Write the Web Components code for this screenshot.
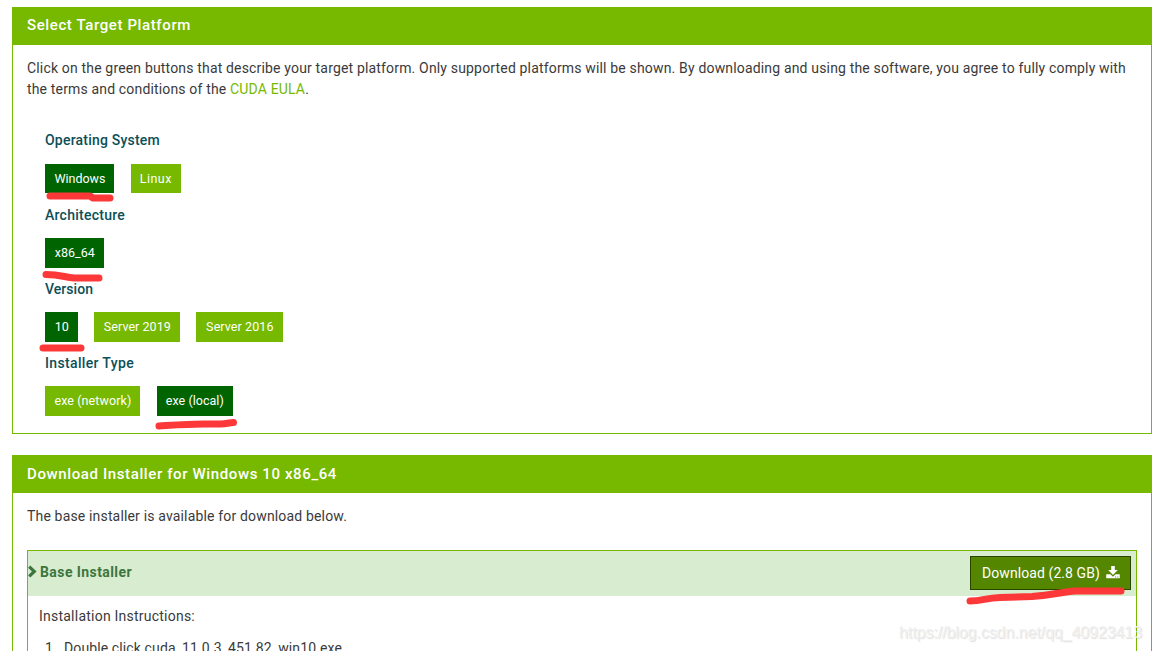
<!DOCTYPE html>
<html lang="en">
<head>
<meta charset="utf-8">
<title>CUDA Toolkit Download</title>
<style>
  :root {
    --color-green: #76b900;
    --color-green-dark: #006400;
    --color-text: #3a3a3a;
    --color-label: #0b4f58;
    --color-mark: #fc3838;
  }

  html, body {
    height: 651px;
    margin: 0;
    overflow: hidden;
    background: #fff;
  }

  body {
    position: relative;
    font-family: Roboto, "Liberation Sans", sans-serif;
    font-size: 14px;
    line-height: 21px;
    color: var(--color-text);
  }

  main {
    display: flex;
    flex-direction: column;
    gap: 21px;
    box-sizing: border-box;
    height: 651px;
    padding: 7px 0 0 12px;
    overflow: hidden;
  }

  a {
    color: var(--color-green);
    text-decoration: none;
  }
</style>
</head>
<body>

<main>
  <panel-card style="height: 427px">
    <tracked-text slot="title" measure="164">Select Target Platform</tracked-text>
    <tracked-text measure="1099">Click on the green buttons that describe your target platform. Only supported platforms will be shown. By downloading and using the software, you agree to fully comply with</tracked-text>
    <tracked-text measure="282">the terms and conditions of the <a href="#">CUDA EULA</a>.</tracked-text>

    <option-list>
      <option-row>
        <tracked-text slot="label" measure="115">Operating System</tracked-text>
        <option-pill selected style="width: 69.4px; height: 29px"><tracked-text measure="51">Windows</tracked-text></option-pill>
        <option-pill style="width: 50px; height: 29px"><tracked-text measure="32">Linux</tracked-text></option-pill>
      </option-row>
      <option-row>
        <tracked-text slot="label" measure="80">Architecture</tracked-text>
        <option-pill selected style="width: 59px"><tracked-text measure="40">x86_64</tracked-text></option-pill>
      </option-row>
      <option-row>
        <tracked-text slot="label" measure="48">Version</tracked-text>
        <option-pill selected style="width: 32.9px"><tracked-text measure="14">10</tracked-text></option-pill>
        <option-pill style="width: 86px"><tracked-text measure="67">Server 2019</tracked-text></option-pill>
        <option-pill style="width: 86.7px"><tracked-text measure="67.5">Server 2016</tracked-text></option-pill>
      </option-row>
      <option-row>
        <tracked-text slot="label" measure="89">Installer Type</tracked-text>
        <option-pill style="width: 95.4px"><tracked-text measure="77">exe (network)</tracked-text></option-pill>
        <option-pill selected style="width: 76px"><tracked-text measure="58">exe (local)</tracked-text></option-pill>
      </option-row>
    </option-list>
  </panel-card>

  <panel-card style="height: 240px; --title-top: 8px">
    <tracked-text slot="title" measure="310">Download Installer for Windows 10 x86_64</tracked-text>
    <tracked-text measure="320">The base installer is available for download below.</tracked-text>

    <installer-box>
      <tracked-text slot="name" measure="92">Base Installer</tracked-text>
      <download-button slot="action"><tracked-text measure="118">Download (2.8 GB)</tracked-text></download-button>
      <tracked-text measure="156">Installation Instructions:</tracked-text>
      <step-item number="1."><tracked-text measure="278">Double click cuda_11.0.3_451.82_win10.exe</tracked-text></step-item>
    </installer-box>
  </panel-card>
</main>

<pen-marks></pen-marks>
<water-mark><tracked-text measure="243">https://blog.csdn.net/qq_40923413</tracked-text></water-mark>

<script>
// Attaches an open shadow root filled with the given markup
function render(el, html) {
  if (el.shadowRoot) return;
  const template = document.createElement('template');
  template.innerHTML = html;
  el.attachShadow({ mode: 'open' }).appendChild(template.content.cloneNode(true));
}

/**
 * <panel-card> bordered section with a green title bar
 * Slots: title, default (body)
 */
class PanelCard extends HTMLElement {
  connectedCallback() {
    render(this, `
      <style>
        :host {
          display: flex;
          flex: none;
          flex-direction: column;
          box-sizing: border-box;
          border: 1px solid var(--color-green);
        }
        header {
          flex: none;
          height: 37px;
          box-sizing: border-box;
          padding: var(--title-top, 7px) 14px 0;
          background: var(--color-green);
          color: #fff;
          font-size: 15px;
          font-weight: 500;
        }
        .body {
          display: flex;
          flex-direction: column;
          padding: 13px 14px 0;
        }
      </style>
      <header><slot name="title"></slot></header>
      <div class="body"><slot></slot></div>
    `);
  }
}

class OptionList extends HTMLElement {
  connectedCallback() {
    render(this, `
      <style>
        :host {
          display: flex;
          flex-direction: column;
          padding: 30px 18px 0;
        }
      </style>
      <slot></slot>
    `);
  }
}

/**
 * <option-row> label above a line of pills
 */
class OptionRow extends HTMLElement {
  connectedCallback() {
    render(this, `
      <style>
        :host { display: block; height: 74.15px; }
        .label {
          height: 34px;
          box-sizing: border-box;
          padding-top: .45px;
          color: var(--color-label);
          font-weight: 500;
        }
        .pills { display: flex; gap: 16.2px; }
      </style>
      <div class="label"><slot name="label"></slot></div>
      <div class="pills"><slot></slot></div>
    `);
  }
}

class OptionPill extends HTMLElement {
  connectedCallback() {
    render(this, `
      <style>
        :host {
          display: flex;
          justify-content: center;
          align-items: center;
          height: 29.5px;
          box-sizing: border-box;
          padding-left: .5px;
          background: var(--color-green);
          color: #fff;
          font-size: 12.5px;
          line-height: 20px;
        }
        :host([selected]) { background: var(--color-green-dark); }
      </style>
      <slot></slot>
    `);
  }
}

class InstallerBox extends HTMLElement {
  connectedCallback() {
    render(this, `
      <style>
        :host {
          display: block;
          height: 160px;
          margin-top: 23px;
          border: 1px solid var(--color-green);
        }
        header {
          display: flex;
          align-items: center;
          height: 45px;
          box-sizing: border-box;
          padding: 0 5px 1px 0;
          background: #d8ecd0;
          color: #3c763d;
          font-weight: 700;
        }
        svg { width: 9px; height: 13px; margin: -3px 3px 0 0; }
        .name { flex: 1; margin-top: -1px; }
        .body {
          display: flex;
          flex-direction: column;
          gap: 11px;
          padding: 10px 11px;
        }
      </style>
      <header>
        <svg viewBox="0 0 9 13"><path d="M1.2 1.6 6.3 6.5 1.2 11.4" fill="none" stroke="#3c763d" stroke-width="3.2"/></svg>
        <span class="name"><slot name="name"></slot></span>
        <slot name="action"></slot>
      </header>
      <div class="body"><slot></slot></div>
    `);
  }
}

class DownloadButton extends HTMLElement {
  connectedCallback() {
    render(this, `
      <style>
        :host {
          display: flex;
          align-items: center;
          box-sizing: border-box;
          width: 161px;
          height: 34px;
          padding-left: 11px;
          border: 1px solid #2b4300;
          background: #558600;
          color: #fff;
          font-weight: 400;
        }
        svg { width: 14px; height: 13px; margin: -2px 0 0 6px; }
      </style>
      <slot></slot>
      <svg viewBox="0 0 14 13" fill="#fff">
        <path d="M5.2 0h3.6v4.1h3L7 8.9 2.2 4.1h3z"/>
        <path fill-rule="evenodd" d="M.7 8.3h3.7L7 10.8l2.6-2.5h3.7q.5 0 .5.5v2.9q0 .6-.6.6H.8q-.6 0-.6-.6V8.8q0-.5.5-.5zM9.2 10.5v.9h.9v-.9zM11.4 10.5v.9h.9v-.9z"/>
      </svg>
    `);
  }
}

class StepItem extends HTMLElement {
  connectedCallback() {
    render(this, `
      <style>
        :host { display: flex; }
        .number { width: 19px; padding-left: 6px; }
      </style>
      <span class="number">${this.getAttribute('number')}</span>
      <slot></slot>
    `);
  }
}

/**
 * <pen-marks> red marker strokes drawn over the page
 */
class PenMarks extends HTMLElement {
  connectedCallback() {
    render(this, `
      <style>
        :host { position: absolute; inset: 0; pointer-events: none; }
        svg { display: block; }
        path {
          fill: none;
          stroke: var(--color-mark);
          stroke-width: 7;
          stroke-linecap: round;
          stroke-linejoin: round;
        }
      </style>
      <svg width="1152" height="651">
        <path d="M50 196H90L93 198H110"/>
        <path d="M46 274.5C60 274.5 64 277 74 278H99"/>
        <path d="M43 348H81"/>
        <path d="M159 426C175 425 188 424 203 424H220C227 424 230 422.5 233.5 422.5"/>
        <path d="M970 601C983 601 985 598 1000 597.5L1032 596.5C1055 595 1060 592 1076 591H1121"/>
      </svg>
    `);
  }
}

class WaterMark extends HTMLElement {
  connectedCallback() {
    render(this, `
      <style>
        :host {
          position: absolute;
          left: 899px;
          top: 622px;
          color: #f1f1f1;
          font: 16px/21px "Liberation Sans", sans-serif;
          text-shadow: 1px 1px 1px rgba(0, 0, 0, .13);
        }
      </style>
      <slot></slot>
    `);
  }
}

/**
 * <tracked-text measure="px"> single line whose letter spacing
 * is spread so that the line fills the given measure
 */
class TrackedText extends HTMLElement {
  connectedCallback() {
    render(this, `
      <style>
        :host {
          display: inline-block;
          align-self: flex-start;
          white-space: nowrap;
        }
        :host([centered]) { align-self: center; }
      </style>
      <slot></slot>
    `);
    const measure = Number(this.getAttribute('measure'));
    const width = this.getBoundingClientRect().width;
    this.style.letterSpacing = `${(measure - width) / this.textContent.length}px`;
    if (/^(OPTION-PILL|DOWNLOAD-BUTTON)$/.test(this.parentElement.tagName)) {
      this.setAttribute('centered', '');
    }
  }
}

customElements.define('panel-card', PanelCard);
customElements.define('option-list', OptionList);
customElements.define('option-row', OptionRow);
customElements.define('option-pill', OptionPill);
customElements.define('installer-box', InstallerBox);
customElements.define('download-button', DownloadButton);
customElements.define('step-item', StepItem);
customElements.define('pen-marks', PenMarks);
customElements.define('water-mark', WaterMark);
// last, so that inherited fonts are already in place when lines are measured
customElements.define('tracked-text', TrackedText);
</script>
</body>
</html>
